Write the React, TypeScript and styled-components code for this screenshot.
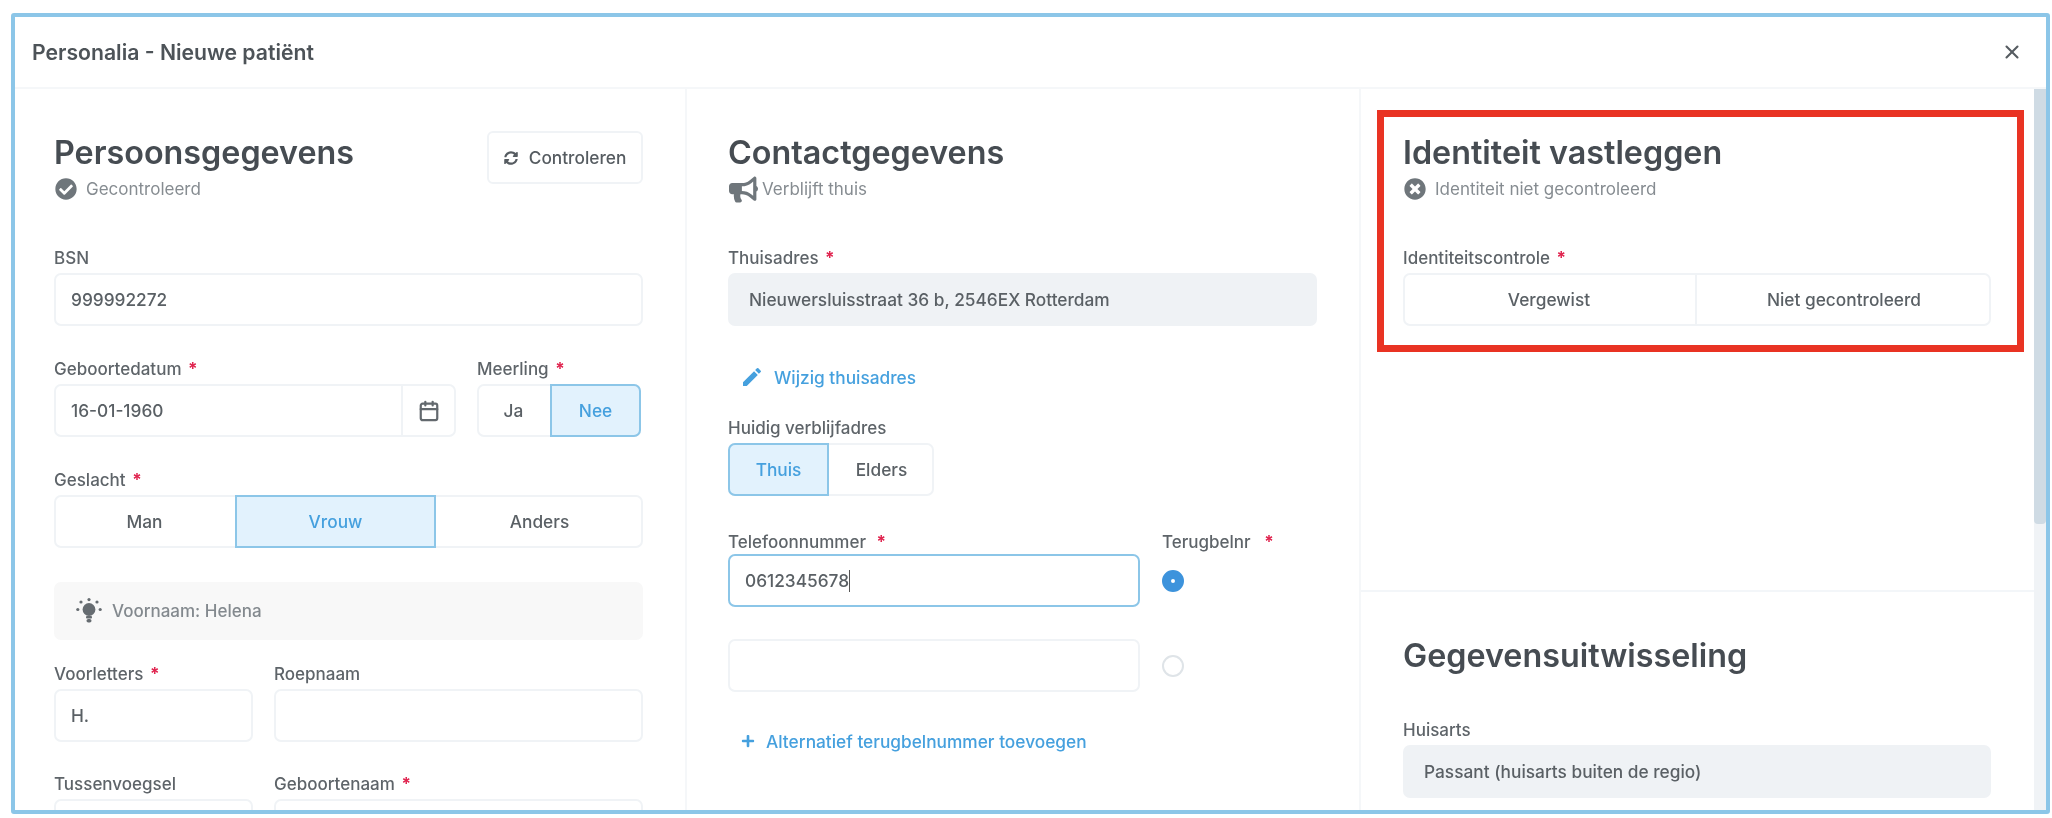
import React from 'react';
import styled, { createGlobalStyle } from 'styled-components';
import { FaBullhorn, FaCheckCircle, FaPlus, FaSyncAlt, FaTimesCircle } from 'react-icons/fa';
import { MdEdit } from 'react-icons/md';
import { LuCalendar, LuX } from 'react-icons/lu';

const GlobalStyle = createGlobalStyle`
    html, body {
        margin: 0;
        background: #fff;
        font-family: Inter, "Liberation Sans", sans-serif;
    }
`;

const Page = styled.div`
    width: 2052px;
    height: 818px;
    padding: 13px 2px 4px 11px;
    box-sizing: border-box;
    overflow: hidden;
    position: relative;
    filter: blur(0.55px);
`;

const Modal = styled.div`
    height: 100%;
    box-sizing: border-box;
    border: 4px solid #8cc6e8;
    border-radius: 3px;
    display: flex;
    flex-direction: column;
    overflow: hidden;
`;

const ModalHeader = styled.header`
    height: 72px;
    flex: none;
    box-sizing: border-box;
    border-bottom: 2px solid #f5f7f9;
    padding: 0 23px 0 17px;
    display: flex;
    align-items: center;
    justify-content: space-between;
    color: #4d5358;
    font-size: 21.2px;
    font-weight: 600;
`;

const Columns = styled.div`
    flex: 1;
    min-height: 0;
    display: grid;
    grid-template-columns: 672px 674px 673px 12px;
`;

const Column = styled.section`
    padding: 44px 42px 0 39px;
    border-right: 2px solid #f5f7f9;
    box-sizing: border-box;
    overflow: hidden;
`;

const MiddleColumn = styled(Column)`
    padding-left: 41px;
    padding-right: 42px;
`;

const SideColumn = styled.div`
    display: flex;
    flex-direction: column;
    overflow: hidden;
`;

const SideSection = styled.section<{ $height?: number }>`
    height: ${(p) => (p.$height ? `${p.$height}px` : 'auto')};
    flex: none;
    box-sizing: border-box;
    padding: 44px 43px 0 42px;
    border-bottom: ${(p) => (p.$height ? '2px solid #f3f6f9' : 'none')};
`;

const ScrollTrack = styled.div`
    background: #f0f3f6;
`;

const ScrollThumb = styled.div`
    height: 435px;
    background: #cfdbe4;
    border-radius: 0 0 4px 4px;
`;

const TitleRow = styled.div`
    display: flex;
    justify-content: space-between;
    align-items: flex-start;
    height: 68px;
    margin-bottom: 46px;
`;

const Title = styled.h2`
    margin: 0;
    height: 40px;
    line-height: 40px;
    font-size: 32.3px;
    font-weight: 600;
    color: #464c52;
`;

const Status = styled.div<{ $gap?: number }>`
    height: 24px;
    margin-top: 4px;
    display: flex;
    align-items: center;
    gap: ${(p) => p.$gap ?? 9}px;
    color: #868c91;
    font-size: 17px;

    svg {
        color: #6f767b;
        margin-left: 1px;
    }
`;

const CheckButton = styled.button`
    width: 156px;
    height: 53px;
    margin-top: -2px;
    background: #fff;
    border: 2px solid #f0f3f6;
    border-radius: 6px;
    display: flex;
    align-items: center;
    justify-content: center;
    gap: 11px;
    color: #565c61;
    font: 500 17.3px Inter, sans-serif;
`;

const Stack = styled.div`
    display: flex;
    flex-direction: column;
    gap: 32px;
`;

const Row = styled.div<{ $columns: string; $pull?: number }>`
    display: grid;
    grid-template-columns: ${(p) => p.$columns};
    column-gap: 21px;
    margin-top: ${(p) => (p.$pull ? `${p.$pull}px` : '0')};
`;

const Field = styled.div``;

const Label = styled.div`
    height: 20px;
    line-height: 22px;
    margin-bottom: 6px;
    font-size: 17px;
    font-weight: 500;
    color: #5e6469;
    white-space: nowrap;
`;

const LabelSpaced = styled(Label)`
    margin-top: 28px;
`;

const HuisartsLabel = styled(Label)`
    margin-top: 43px;
`;

const Required = styled.span<{ $gap?: number }>`
    color: #e0234e;
    font-weight: 700;
    margin-left: ${(p) => p.$gap ?? 2}px;
`;

const Input = styled.div<{ $focus?: boolean }>`
    height: 53px;
    box-sizing: border-box;
    border: 2px solid ${(p) => (p.$focus ? '#8cc6e8' : '#f0f3f6')};
    border-radius: 7px;
    padding: 0 15px;
    display: flex;
    align-items: center;
    background: #fff;
    color: #5a6065;
    font-size: 17.3px;
    font-weight: 500;
`;

const Caret = styled.span`
    width: 1px;
    height: 22px;
    background: #555;
`;

const DateAddon = styled.div`
    align-self: stretch;
    width: 51px;
    margin-right: -15px;
    margin-left: auto;
    border-left: 2px solid #f0f3f6;
    display: flex;
    align-items: center;
    justify-content: center;
    color: #63696e;
`;

const ReadOnly = styled.div`
    height: 53px;
    border-radius: 7px;
    padding: 0 21px;
    display: flex;
    align-items: center;
    background: #eff2f5;
    color: #5a6065;
    font-size: 17.3px;
    font-weight: 500;
`;

const Segments = styled.div<{ $columns: string; $width?: number }>`
    height: 53px;
    width: ${(p) => (p.$width ? `${p.$width}px` : 'auto')};
    display: grid;
    grid-template-columns: ${(p) => p.$columns};
    border-radius: 7px;
    box-shadow: inset 0 0 0 2px #f0f3f6;
`;

const Segment = styled.div<{ $active?: boolean; $divided?: boolean }>`
    display: flex;
    align-items: center;
    justify-content: center;
    box-sizing: border-box;
    font-size: 17.3px;
    font-weight: 500;
    color: ${(p) => (p.$active ? '#45a0de' : '#5a6065')};
    background: ${(p) => (p.$active ? '#e2f2fd' : 'transparent')};
    border: ${(p) => (p.$active ? '2px solid #8cc6e8' : 'none')};
    border-right: ${(p) => (p.$divided ? '2px solid #f0f3f6' : undefined)};
    &:first-child {
        border-radius: 7px 0 0 7px;
    }
    &:last-child {
        border-radius: 0 7px 7px 0;
    }
`;

const Hint = styled.div`
    height: 58px;
    margin-top: 2px;
    margin-bottom: -9px;
    border-radius: 7px;
    background: #f8f8f8;
    padding: 0 21px;
    display: flex;
    align-items: center;
    gap: 9px;
    color: #83898e;
    font-size: 17px;
    font-weight: 500;
`;

const LinkAction = styled.div<{ $top: number; $left: number; $gap: number }>`
    height: 24px;
    margin-top: ${(p) => p.$top}px;
    padding-left: ${(p) => p.$left}px;
    display: flex;
    align-items: center;
    gap: ${(p) => p.$gap}px;
    color: #45a0de;
    font-size: 17.3px;
    font-weight: 500;
`;

const PhoneGrid = styled.div`
    margin-top: 35px;
    display: grid;
    grid-template-columns: 412px 1fr;
    column-gap: 22px;
    row-gap: 32px;
`;

const PhoneHead = styled(Label)`
    margin-bottom: 3px;
`;

const RadioCell = styled.div<{ $height?: number }>`
    height: ${(p) => (p.$height ? `${p.$height}px` : 'auto')};
    display: flex;
    align-items: center;
`;

const Radio = styled.span<{ $on?: boolean }>`
    width: 22px;
    height: 22px;
    box-sizing: border-box;
    border-radius: 50%;
    background: #fff;
    border: ${(p) => (p.$on ? '9px solid #3d93dc' : '2px solid #dfe4e8')};
`;

const Highlight = styled.div`
    position: absolute;
    left: 1377px;
    top: 110px;
    width: 647px;
    height: 242px;
    box-sizing: border-box;
    border: 7px solid #e93323;
`;

const BulbIcon = () => (
    <svg width="28" height="28" viewBox="0 0 28 28" fill="#666c71">
        <circle cx="14" cy="12.5" r="6.4" />
        <rect x="11" y="19" width="6" height="2.4" rx="1" />
        <rect x="11.5" y="22" width="5" height="3.6" rx="1.8" />
        <circle cx="14" cy="2.6" r="1.6" />
        <circle cx="2.8" cy="12.5" r="1.6" />
        <circle cx="25.2" cy="12.5" r="1.6" />
        <circle cx="6" cy="5" r="1.6" />
        <circle cx="22" cy="5" r="1.6" />
    </svg>
);

const Star = ({ gap }: { gap?: number }) => <Required $gap={gap}>*</Required>;

const App = () => {
    return (
        <>
            <GlobalStyle />
            <Page>
                <Modal>
                    <ModalHeader>
                        <span>Personalia - Nieuwe patiënt</span>
                        <LuX size={22} color="#565c61" strokeWidth={2.3} />
                    </ModalHeader>
                    <Columns>
                        <Column>
                            <TitleRow>
                                <div>
                                    <Title>Persoonsgegevens</Title>
                                    <Status>
                                        <FaCheckCircle size={22} />
                                        Gecontroleerd
                                    </Status>
                                </div>
                                <CheckButton>
                                    <FaSyncAlt size={14} />
                                    Controleren
                                </CheckButton>
                            </TitleRow>
                            <Stack>
                                <Field>
                                    <Label>BSN</Label>
                                    <Input>999992272</Input>
                                </Field>
                                <Row $columns="402px 164px">
                                    <Field>
                                        <Label>
                                            Geboortedatum <Star />
                                        </Label>
                                        <Input>
                                            16-01-1960
                                            <DateAddon>
                                                <LuCalendar size={22} strokeWidth={2.4} />
                                            </DateAddon>
                                        </Input>
                                    </Field>
                                    <Field>
                                        <Label>
                                            Meerling <Star />
                                        </Label>
                                        <Segments $columns="73px 1fr">
                                            <Segment>Ja</Segment>
                                            <Segment $active>Nee</Segment>
                                        </Segments>
                                    </Field>
                                </Row>
                                <Field>
                                    <Label>
                                        Geslacht <Star />
                                    </Label>
                                    <Segments $columns="181px 201px 1fr">
                                        <Segment>Man</Segment>
                                        <Segment $active>Vrouw</Segment>
                                        <Segment>Anders</Segment>
                                    </Segments>
                                </Field>
                                <Hint>
                                    <BulbIcon />
                                    Voornaam: Helena
                                </Hint>
                                <Row $columns="199px 1fr">
                                    <Field>
                                        <Label>
                                            Voorletters <Star />
                                        </Label>
                                        <Input>H.</Input>
                                    </Field>
                                    <Field>
                                        <Label>Roepnaam</Label>
                                        <Input />
                                    </Field>
                                </Row>
                                <Row $columns="199px 1fr" $pull={-1}>
                                    <Field>
                                        <Label>Tussenvoegsel</Label>
                                        <Input />
                                    </Field>
                                    <Field>
                                        <Label>
                                            Geboortenaam <Star />
                                        </Label>
                                        <Input />
                                    </Field>
                                </Row>
                            </Stack>
                        </Column>
                        <MiddleColumn>
                            <TitleRow>
                                <div>
                                    <Title>Contactgegevens</Title>
                                    <Status $gap={4}>
                                        <FaBullhorn size={29} />
                                        Verblijft thuis
                                    </Status>
                                </div>
                            </TitleRow>
                            <Field>
                                <Label>
                                    Thuisadres <Star />
                                </Label>
                                <ReadOnly>Nieuwersluisstraat 36 b, 2546EX Rotterdam</ReadOnly>
                            </Field>
                            <LinkAction $top={39} $left={12} $gap={10}>
                                <MdEdit size={24} />
                                Wijzig thuisadres
                            </LinkAction>
                            <Field>
                                <LabelSpaced>Huidig verblijfadres</LabelSpaced>
                                <Segments $columns="101px 105px" $width={206}>
                                    <Segment $active>Thuis</Segment>
                                    <Segment>Elders</Segment>
                                </Segments>
                            </Field>
                            <PhoneGrid>
                                <div>
                                    <PhoneHead>
                                        Telefoonnummer <Star gap={6} />
                                    </PhoneHead>
                                    <Input $focus>
                                        0612345678
                                        <Caret />
                                    </Input>
                                </div>
                                <div>
                                    <PhoneHead>
                                        Terugbelnr <Star gap={9} />
                                    </PhoneHead>
                                    <RadioCell $height={53}>
                                        <Radio $on />
                                    </RadioCell>
                                </div>
                                <Input />
                                <RadioCell>
                                    <Radio />
                                </RadioCell>
                            </PhoneGrid>
                            <LinkAction $top={37} $left={13} $gap={11}>
                                <FaPlus size={14} />
                                Alternatief terugbelnummer toevoegen
                            </LinkAction>
                        </MiddleColumn>
                        <SideColumn>
                            <SideSection $height={503}>
                                <TitleRow>
                                    <div>
                                        <Title>Identiteit vastleggen</Title>
                                        <Status>
                                            <FaTimesCircle size={22} />
                                            Identiteit niet gecontroleerd
                                        </Status>
                                    </div>
                                </TitleRow>
                                <Field>
                                    <Label>
                                        Identiteitscontrole <Star />
                                    </Label>
                                    <Segments $columns="294px 1fr">
                                        <Segment $divided>Vergewist</Segment>
                                        <Segment>Niet gecontroleerd</Segment>
                                    </Segments>
                                </Field>
                            </SideSection>
                            <SideSection>
                                <Title>Gegevensuitwisseling</Title>
                                <Field>
                                    <HuisartsLabel>Huisarts</HuisartsLabel>
                                    <ReadOnly>Passant (huisarts buiten de regio)</ReadOnly>
                                </Field>
                            </SideSection>
                        </SideColumn>
                        <ScrollTrack>
                            <ScrollThumb />
                        </ScrollTrack>
                    </Columns>
                </Modal>
                <Highlight />
            </Page>
        </>
    );
};

export default App;
